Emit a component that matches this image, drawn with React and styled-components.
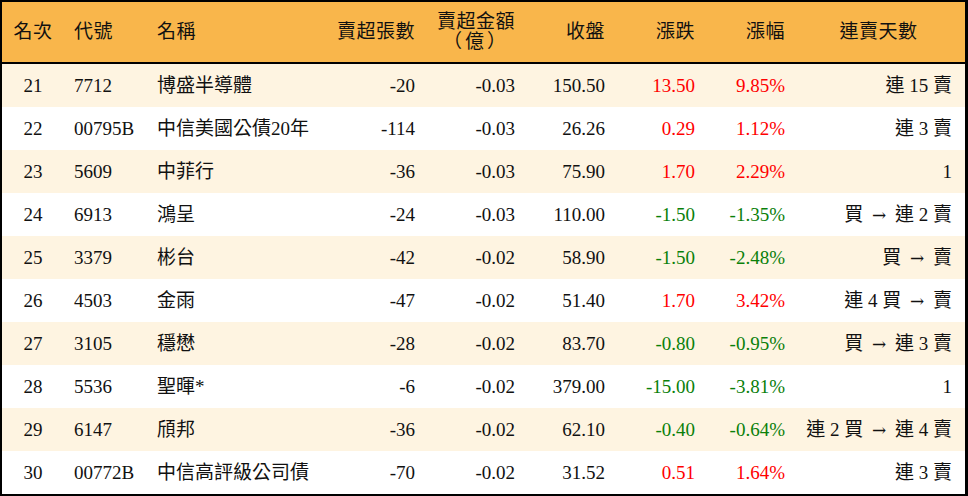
import React from "react";
import styled, { createGlobalStyle } from "styled-components";

const rows = [
  { rank: 21, code: "7712", name: "博盛半導體", lots: "-20", amount: "-0.03", close: "150.50", change: "13.50", pct: "9.85%", streak: "連 15 賣" },
  { rank: 22, code: "00795B", name: "中信美國公債20年", lots: "-114", amount: "-0.03", close: "26.26", change: "0.29", pct: "1.12%", streak: "連 3 賣" },
  { rank: 23, code: "5609", name: "中菲行", lots: "-36", amount: "-0.03", close: "75.90", change: "1.70", pct: "2.29%", streak: "1" },
  { rank: 24, code: "6913", name: "鴻呈", lots: "-24", amount: "-0.03", close: "110.00", change: "-1.50", pct: "-1.35%", streak: "買 → 連 2 賣" },
  { rank: 25, code: "3379", name: "彬台", lots: "-42", amount: "-0.02", close: "58.90", change: "-1.50", pct: "-2.48%", streak: "買 → 賣" },
  { rank: 26, code: "4503", name: "金雨", lots: "-47", amount: "-0.02", close: "51.40", change: "1.70", pct: "3.42%", streak: "連 4 買 → 賣" },
  { rank: 27, code: "3105", name: "穩懋", lots: "-28", amount: "-0.02", close: "83.70", change: "-0.80", pct: "-0.95%", streak: "買 → 連 3 賣" },
  { rank: 28, code: "5536", name: "聖暉*", lots: "-6", amount: "-0.02", close: "379.00", change: "-15.00", pct: "-3.81%", streak: "1" },
  { rank: 29, code: "6147", name: "頎邦", lots: "-36", amount: "-0.02", close: "62.10", change: "-0.40", pct: "-0.64%", streak: "連 2 買 → 連 4 賣" },
  { rank: 30, code: "00772B", name: "中信高評級公司債", lots: "-70", amount: "-0.02", close: "31.52", change: "0.51", pct: "1.64%", streak: "連 3 賣" },
];

const COLUMNS = "62px 83px 178px 100px 100px 90px 90px 90px 1fr";

const GlobalStyle = createGlobalStyle`
  html, body {
    margin: 0;
    padding: 0;
    background: #fff;
  }
  body {
    font-family: "Liberation Serif", "Noto Sans CJK TC", serif;
  }
`;

const Board = styled.div`
  width: 968px;
  height: 496px;
  box-sizing: border-box;
  border: 2px solid #000;
  border-right-width: 3px;
  display: flex;
  flex-direction: column;
  color: #111;
  font-size: 19px;
`;

const HeaderRow = styled.div`
  display: grid;
  grid-template-columns: ${COLUMNS};
  height: 60px;
  background: #f9b64b;
  border-bottom: 2px solid #000;
  align-items: center;
`;

const Row = styled.div`
  display: grid;
  grid-template-columns: ${COLUMNS};
  height: 43px;
  align-items: center;
  background: ${(p) => (p.$shaded ? "#fef4e1" : "#ffffff")};
`;

const Cell = styled.div`
  padding: 0 10px;
  white-space: nowrap;
  text-align: ${(p) => p.$align || "left"};
  color: ${(p) => p.$color || "inherit"};
  line-height: 1.05;
  &:last-child {
    padding-right: 13px;
  }
`;

const HeadCell = styled(Cell)`
  letter-spacing: 0.5px;
`;

const Sub = styled.span`
  display: block;
  letter-spacing: 3px;
  padding-right: 6px;
`;

const Arrow = styled.span`
  font-family: "DejaVu Serif", serif;
  font-size: 17px;
  margin: 0 4px;
`;

const tone = (v) => (v.startsWith("-") ? "#0a800a" : "#ff0000");

// split the streak text so the arrow gets a font that actually has it
const Streak = ({ text }) => {
  const parts = text.split("→");
  return parts.map((p, i) => (
    <React.Fragment key={i}>
      {p}
      {i < parts.length - 1 && <Arrow>→</Arrow>}
    </React.Fragment>
  ));
};

export default function App() {
  return (
    <>
      <GlobalStyle />
      <Board>
        <HeaderRow>
          <HeadCell $align="center">名次</HeadCell>
          <HeadCell>代號</HeadCell>
          <HeadCell>名稱</HeadCell>
          <HeadCell $align="right">賣超張數</HeadCell>
          <HeadCell $align="right">
            賣超金額
            <Sub>（億）</Sub>
          </HeadCell>
          <HeadCell $align="right">收盤</HeadCell>
          <HeadCell $align="right">漲跌</HeadCell>
          <HeadCell $align="right">漲幅</HeadCell>
          <HeadCell $align="center">連賣天數</HeadCell>
        </HeaderRow>
        {rows.map((r, i) => (
          <Row key={r.rank} $shaded={i % 2 === 0}>
            <Cell $align="center">{r.rank}</Cell>
            <Cell>{r.code}</Cell>
            <Cell>{r.name}</Cell>
            <Cell $align="right">{r.lots}</Cell>
            <Cell $align="right">{r.amount}</Cell>
            <Cell $align="right">{r.close}</Cell>
            <Cell $align="right" $color={tone(r.change)}>{r.change}</Cell>
            <Cell $align="right" $color={tone(r.pct)}>{r.pct}</Cell>
            <Cell $align="right"><Streak text={r.streak} /></Cell>
          </Row>
        ))}
      </Board>
    </>
  );
}
